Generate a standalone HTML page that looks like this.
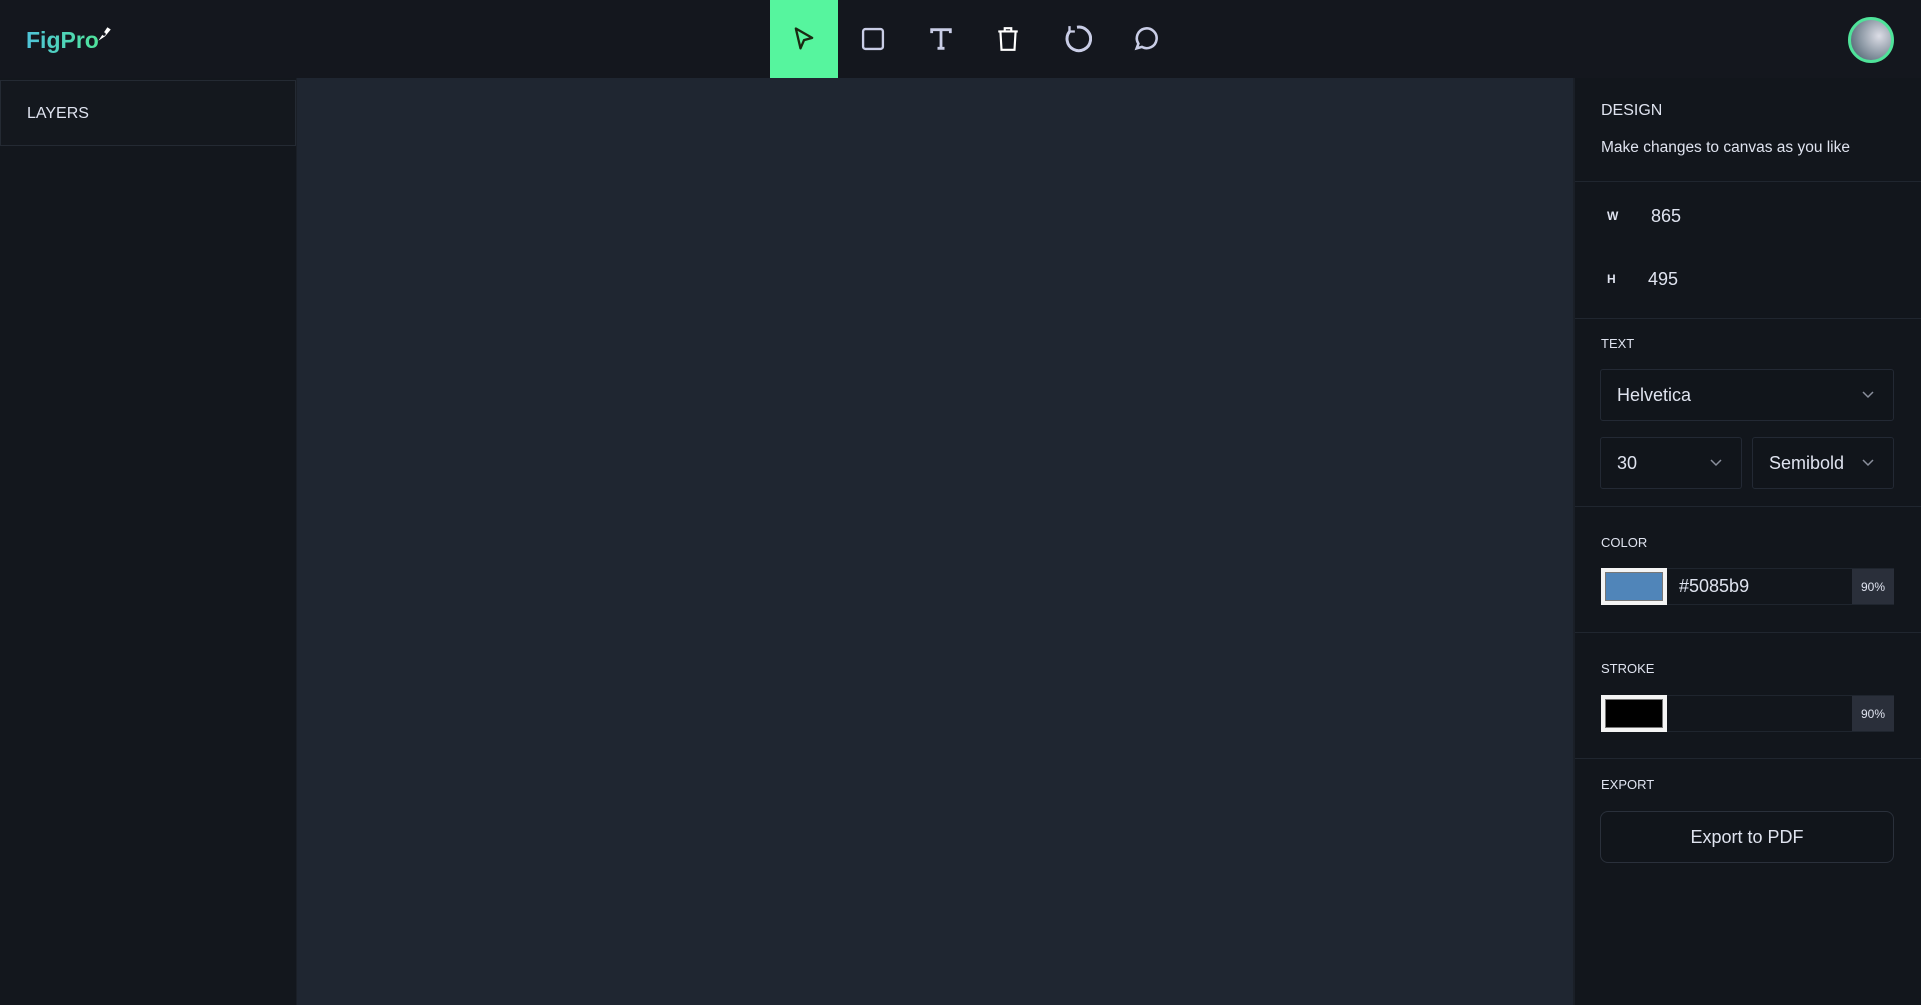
<!DOCTYPE html>
<html><head><meta charset="utf-8"><style>
*{box-sizing:border-box;margin:0;padding:0}
body{width:1921px;height:1005px;overflow:hidden;background:#1f2631;font-family:"Liberation Sans",sans-serif;color:#dfe3ef;position:relative}
.nav{position:absolute;left:0;top:0;width:1921px;height:78px;background:#14171e}
.logo{position:absolute;left:26px;top:27px;font-size:23px;font-weight:bold;background:linear-gradient(90deg,#4fc3d9,#4fe39a);-webkit-background-clip:text;color:transparent}
.tool{position:absolute;top:0;width:68px;height:78px;display:flex;align-items:center;justify-content:center}
.left{position:absolute;left:0;top:78px;width:297px;height:927px;background:#13171d;border-right:1px solid #1a1f27}
.layers{height:66px;border:1px solid #242a33;background:#14181e;padding:24px 26px;font-size:16px;margin-top:2px}
.right{position:absolute;left:1573px;top:78px;width:348px;height:927px;background:#12161c;border-left:2px solid #1a1f27}
.r{position:absolute;left:26px}
.sep{position:absolute;left:0;width:348px;height:1px;background:#20262f}
.lab{font-size:13px}
.box{position:absolute;border:1px solid #232934;border-radius:3px;display:flex;align-items:center;padding-left:16px;font-size:18px;background:#11151b}
.chev{position:absolute;right:18px;top:50%;margin-top:-6px}
.sw{position:absolute;width:66px;height:37px;background:#f4f4f4;padding:4px 4px}
.pct{position:absolute;width:42px;background:#2a2f3a;font-size:12px;display:flex;align-items:center;justify-content:center}
</style></head><body>
<div class="nav">
<div class="logo">FigPro<svg width="16" height="18" viewBox="0 0 14 16" style="position:absolute;left:70px;top:-2px"><path d="M2 14 L6 8 L10 2 L13 4 L8 10 Z" fill="#fff"/><circle cx="7" cy="8" r="1.5" fill="#14171e"/></svg></div>
<div class="tool" style="left:770px;background:#56f59e"><svg width="28" height="28" viewBox="0 0 24 24" fill="none" stroke="#1b2a12" stroke-width="2" stroke-linejoin="round"><path d="M5 3 L19 11 L12 13 L9 20 Z"/></svg></div>
<div class="tool" style="left:839px"><svg width="28" height="28" viewBox="0 0 24 24" fill="none" stroke="#c9cde6" stroke-width="2"><rect x="3.5" y="3.5" width="17" height="17" rx="2"/></svg></div>
<div class="tool" style="left:907px"><svg width="28" height="28" viewBox="0 0 24 24" fill="none" stroke="#c9cde6" stroke-width="2.4"><path d="M4 7V4H20V7M12 4V20M9 20H15"/></svg></div>
<div class="tool" style="left:974px"><svg width="26" height="30" viewBox="0 0 24 26" fill="none" stroke="#fff" stroke-width="2"><path d="M3 6H21M9 6V3H15V6M5 6L6 23H18L19 6"/></svg></div>
<div class="tool" style="left:1043px"><svg width="30" height="30" viewBox="0 0 28 28" fill="none" stroke="#c9cde6" stroke-width="2.8"><path d="M8 6A11 11 0 1 0 14 3"/><path d="M7 2V7H12" stroke-width="2.2"/></svg></div>
<div class="tool" style="left:1112px"><svg width="28" height="28" viewBox="0 0 24 24" fill="none" stroke="#c9cde6" stroke-width="2.2"><path d="M4 20L5.5 16A8.5 8.5 0 1 1 8.5 18.8Z"/></svg></div>
<div style="position:absolute;left:1848px;top:17px;width:46px;height:46px;border-radius:50%;border:3px solid #4fe39a;background:radial-gradient(circle at 70% 40%,#dcdde6,#8e9aa6 50%,#3d5563)"></div>
</div>
<div class="left"><div class="layers">LAYERS</div></div>
<div class="right">
<div class="r" style="top:24px;font-size:16px">DESIGN</div>
<div class="r" style="top:61px;font-size:15.5px">Make changes to canvas as you like</div>
<div class="sep" style="top:103px"></div>
<div class="r" style="top:131px;font-size:12px;font-weight:bold;left:32px">W</div>
<div class="r" style="top:128px;font-size:18px;left:76px">865</div>
<div class="r" style="top:194px;font-size:12px;font-weight:bold;left:32px">H</div>
<div class="r" style="top:191px;font-size:18px;left:73px">495</div>
<div class="sep" style="top:240px"></div>
<div class="r lab" style="top:258px">TEXT</div>
<div class="box" style="left:25px;top:291px;width:294px;height:52px">Helvetica<svg class="chev" width="14" height="12" viewBox="0 0 14 12" fill="none" stroke="#8a8f9c" stroke-width="1.5"><path d="M2 3L7 8L12 3"/></svg></div>
<div class="box" style="left:25px;top:359px;width:142px;height:52px">30<svg class="chev" width="14" height="12" viewBox="0 0 14 12" fill="none" stroke="#8a8f9c" stroke-width="1.5"><path d="M2 3L7 8L12 3"/></svg></div>
<div class="box" style="left:177px;top:359px;width:142px;height:52px;padding-left:16px">Semibold<svg class="chev" width="14" height="12" viewBox="0 0 14 12" fill="none" stroke="#8a8f9c" stroke-width="1.5"><path d="M2 3L7 8L12 3"/></svg></div>
<div class="sep" style="top:428px"></div>
<div class="r lab" style="top:457px">COLOR</div>
<div style="position:absolute;left:26px;top:490px;width:293px;height:37px;border:1px solid #1f252e"></div>
<div class="sw" style="left:26px;top:490px"><div style="width:100%;height:100%;background:#5085b9;border:1px solid #777"></div></div>
<div class="r" style="left:104px;top:498px;font-size:18px">#5085b9</div>
<div class="pct" style="left:277px;top:491px;height:35px">90%</div>
<div class="sep" style="top:554px"></div>
<div class="r lab" style="top:583px">STROKE</div>
<div style="position:absolute;left:26px;top:617px;width:293px;height:37px;border:1px solid #1f252e"></div>
<div class="sw" style="left:26px;top:617px"><div style="width:100%;height:100%;background:#000;border:1px solid #777"></div></div>
<div class="pct" style="left:277px;top:618px;height:35px">90%</div>
<div class="sep" style="top:680px"></div>
<div class="r lab" style="top:699px">EXPORT</div>
<div class="box" style="left:25px;top:733px;width:294px;height:52px;border-radius:8px;justify-content:center;padding:0;border-color:#2a303b">Export to PDF</div>
</div>
</body></html>
